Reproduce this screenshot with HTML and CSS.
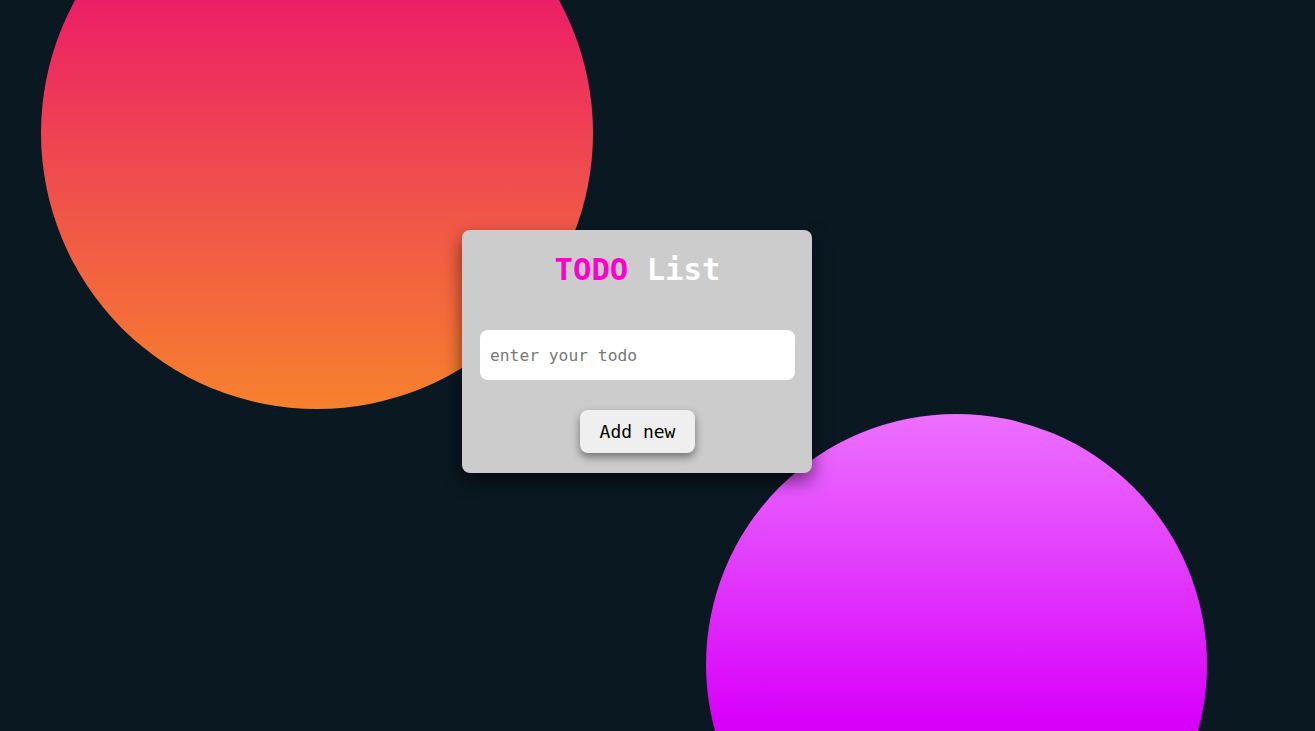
FILE: index.html
```html
<!DOCTYPE html>
<html lang="en">
<head>
<meta charset="utf-8">
<title>TODO List</title>
<link rel="stylesheet" href="styles.css">
</head>
<body>
<div class="stage">
  <div class="blob blob-warm"></div>
  <div class="blob blob-violet"></div>
  <div class="card">
    <h1 class="title"><span class="title-accent">TODO</span> List</h1>
    <input class="todo-input" type="text" placeholder="enter your todo">
    <button class="add-btn" type="button">Add new</button>
  </div>
</div>
</body>
</html>
```
FILE: styles.css
```css
html, body {
  margin: 0;
  padding: 0;
  height: 100%;
}

body {
  background: #0a1821;
  font-family: "DejaVu Sans Mono", "Liberation Mono", monospace;
  overflow: hidden;
}

.stage {
  position: relative;
  height: 100vh;
  display: grid;
  place-items: center;
  padding: 0 41px 28px 0;
  box-sizing: border-box;
  overflow: hidden;
}

.blob {
  position: absolute;
  border-radius: 50%;
}

.blob-warm {
  left: 41px;
  top: -143px;
  width: 552px;
  height: 552px;
  background: linear-gradient(#ec1f66 26%, #f0524a 62%, #f7812d 100%);
}

.blob-violet {
  left: 706px;
  top: 414px;
  width: 501px;
  height: 501px;
  background: linear-gradient(#ec70ff 0%, #e23cfd 30%, #d900fa 61%, #d400f8 100%);
}

.card {
  position: relative;
  z-index: 1;
  width: 350px;
  box-sizing: border-box;
  padding: 22px 17px 20px 18px;
  background: #cccccc;
  border-radius: 8px;
  box-shadow: 0 8px 18px rgba(0, 0, 0, 0.55);
  display: flex;
  flex-direction: column;
  align-items: center;
}

.title {
  margin: 0;
  font-size: 30.6px;
  line-height: 36px;
  font-weight: bold;
  color: #ffffff;
  text-align: center;
}

.title-accent {
  color: #ff00cc;
}

.todo-input {
  margin-top: 42px;
  width: 315px;
  height: 50px;
  box-sizing: border-box;
  border: none;
  border-radius: 8px;
  background: #ffffff;
  padding: 0 10px;
  font-family: "DejaVu Sans Mono", "Liberation Mono", monospace;
  font-size: 16.3px;
  color: #222;
  outline: none;
}

.todo-input::placeholder {
  color: #777777;
}

.add-btn {
  margin-top: 30px;
  height: 43px;
  padding: 0 20px;
  border: none;
  border-radius: 8px;
  background: #efefef;
  color: #000000;
  font-family: "DejaVu Sans Mono", "Liberation Mono", monospace;
  font-size: 18px;
  box-shadow: 0 4px 8px rgba(0, 0, 0, 0.45);
  cursor: pointer;
}
```
